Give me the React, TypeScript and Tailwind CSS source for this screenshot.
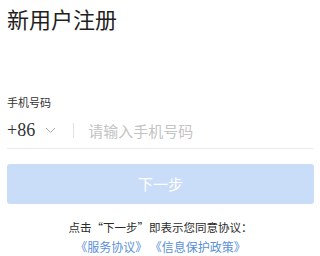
export default function App() {
  return (
    <div
      className="w-full h-[256px] bg-white pl-[7px] pr-[6px] overflow-hidden"
      style={{ fontFamily: '"Noto Sans CJK SC", "Liberation Sans", sans-serif' }}
    >
      <h1 className="pt-[7px] text-[22px] leading-[22px] font-normal text-[#1f1f1f]">
        新用户注册
      </h1>

      <div className="mt-[68px] text-[11px] leading-[11px] text-[#333]">手机号码</div>

      <div className="mt-[4px] flex h-[37px] items-center border-b border-[#ececec]">
        <span className="font-['Liberation_Serif'] text-[18px] leading-none text-[#333]">
          +86
        </span>
        <svg className="ml-[10px]" width="11" height="7" viewBox="0 0 11 7" fill="none">
          <path d="M1 1l4.5 4.5L10 1" stroke="#a8a8a8" strokeWidth="1" />
        </svg>
        <div className="ml-[17px] h-[15px] w-px bg-[#e2e2e2]" />
        <span className="ml-[14px] text-[15px] leading-none text-[#c4c4c4]">
          请输入手机号码
        </span>
      </div>

      <button className="mt-[15px] flex h-[40px] w-full items-center justify-center rounded-[3px] bg-[#c9ddf8] text-[15px] text-white">
        下一步
      </button>

      <div className="mt-[14px] text-center leading-[19px]">
        <div className="text-[11.5px] text-[#2a2a2a]">点击“下一步”即表示您同意协议：</div>
        <div className="text-[12px] text-[#5a8fd8]">《服务协议》 《信息保护政策》</div>
      </div>
    </div>
  );
}
